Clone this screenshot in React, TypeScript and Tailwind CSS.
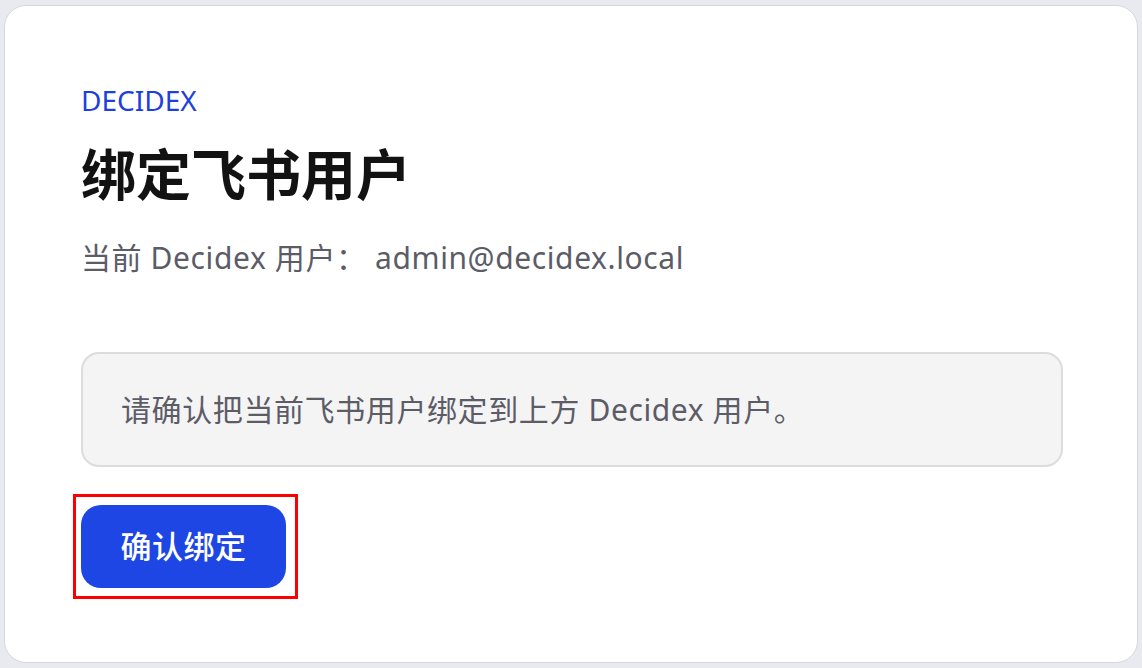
import React from "react";

export default function App() {
  return (
    <div
      className="min-h-[668px] w-full bg-[#e9eaf0] px-[4px] pt-[5px] pb-[5px]"
      style={{ fontFamily: '"Noto Sans", "Noto Sans CJK SC", sans-serif' }}
    >
      <div className="h-[658px] rounded-[22px] border border-[#d6d7df] bg-white pl-[76px] pr-[74px] pt-[80px]">
        <div className="text-[28px] leading-[28px] tracking-[0px] text-[#1d40dd]">DECIDEX</div>
        <h1 className="mt-[32px] text-[55px] leading-[55px] font-bold text-[#121212]">绑定飞书用户</h1>
        <p className="mt-[42px] text-[30px] leading-[30px] tracking-[0.6px] text-[#5c5c67]">
          当前 Decidex 用户： admin@decidex.local
        </p>
        <div className="mt-[79px] flex h-[115px] items-center rounded-[18px] border-2 border-[#dcdcdf] bg-[#f4f4f5] px-[38px]">
          <span className="text-[30px] leading-[30px] tracking-[0.6px] text-[#5c5c67]">请确认把当前飞书用户绑定到上方 Decidex 用户。</span>
        </div>
        <div className="relative mt-[38px] inline-block">
          <button className="flex h-[83px] w-[205px] items-center justify-center rounded-[20px] bg-[#1e46e4] text-[31px] font-medium tracking-[0.5px] text-white">
            确认绑定
          </button>
          <div className="pointer-events-none absolute -left-[8px] -top-[11px] -right-[12px] -bottom-[11px] border-[3px] border-[#ff0000]" />
        </div>
      </div>
    </div>
  );
}
